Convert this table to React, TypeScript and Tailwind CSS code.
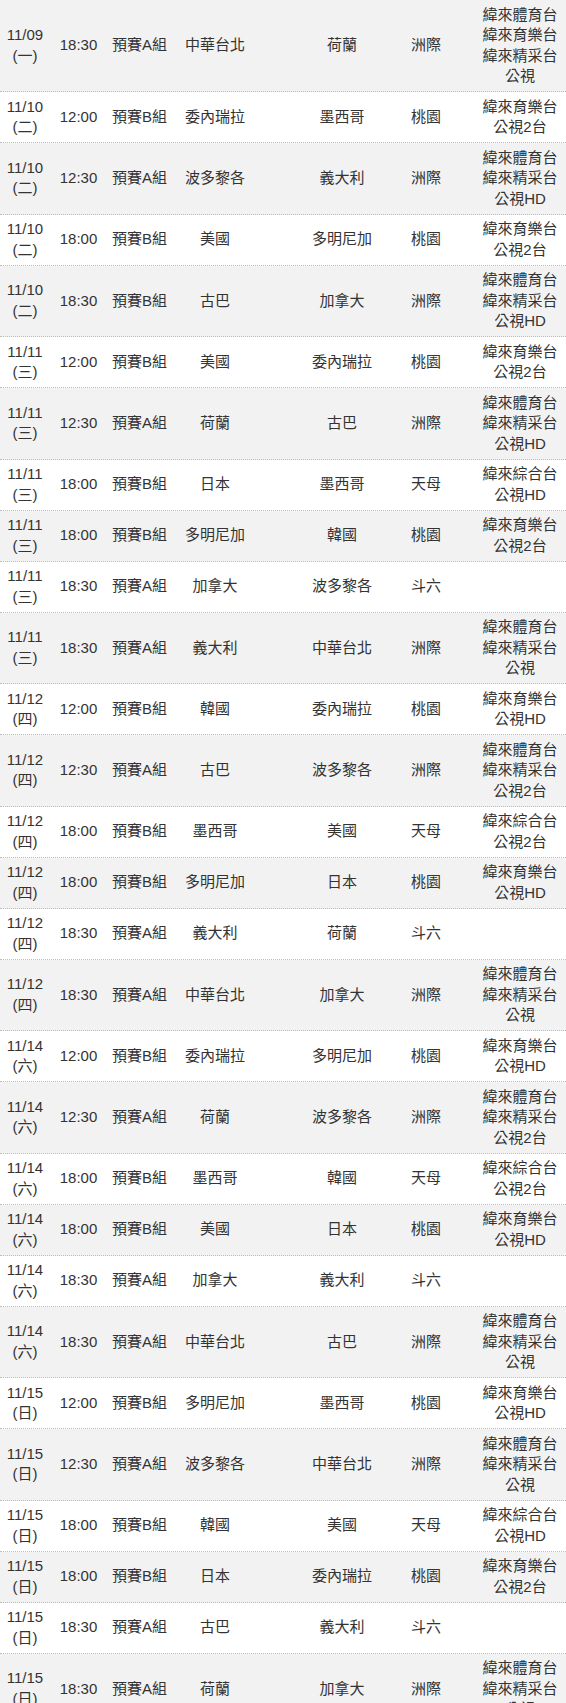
type Game = {
  date: string;
  day: string;
  time: string;
  group: string;
  home: string;
  away: string;
  venue: string;
  tv: string[];
};

const SPORTS = ["緯來體育台", "緯來精采台"];

const games: Game[] = [
  { date: "11/09", day: "一", time: "18:30", group: "預賽A組", home: "中華台北", away: "荷蘭", venue: "洲際", tv: ["緯來體育台", "緯來育樂台", "緯來精采台", "公視"] },
  { date: "11/10", day: "二", time: "12:00", group: "預賽B組", home: "委內瑞拉", away: "墨西哥", venue: "桃園", tv: ["緯來育樂台", "公視2台"] },
  { date: "11/10", day: "二", time: "12:30", group: "預賽A組", home: "波多黎各", away: "義大利", venue: "洲際", tv: [...SPORTS, "公視HD"] },
  { date: "11/10", day: "二", time: "18:00", group: "預賽B組", home: "美國", away: "多明尼加", venue: "桃園", tv: ["緯來育樂台", "公視2台"] },
  { date: "11/10", day: "二", time: "18:30", group: "預賽B組", home: "古巴", away: "加拿大", venue: "洲際", tv: [...SPORTS, "公視HD"] },
  { date: "11/11", day: "三", time: "12:00", group: "預賽B組", home: "美國", away: "委內瑞拉", venue: "桃園", tv: ["緯來育樂台", "公視2台"] },
  { date: "11/11", day: "三", time: "12:30", group: "預賽A組", home: "荷蘭", away: "古巴", venue: "洲際", tv: [...SPORTS, "公視HD"] },
  { date: "11/11", day: "三", time: "18:00", group: "預賽B組", home: "日本", away: "墨西哥", venue: "天母", tv: ["緯來綜合台", "公視HD"] },
  { date: "11/11", day: "三", time: "18:00", group: "預賽B組", home: "多明尼加", away: "韓國", venue: "桃園", tv: ["緯來育樂台", "公視2台"] },
  { date: "11/11", day: "三", time: "18:30", group: "預賽A組", home: "加拿大", away: "波多黎各", venue: "斗六", tv: [] },
  { date: "11/11", day: "三", time: "18:30", group: "預賽A組", home: "義大利", away: "中華台北", venue: "洲際", tv: [...SPORTS, "公視"] },
  { date: "11/12", day: "四", time: "12:00", group: "預賽B組", home: "韓國", away: "委內瑞拉", venue: "桃園", tv: ["緯來育樂台", "公視HD"] },
  { date: "11/12", day: "四", time: "12:30", group: "預賽A組", home: "古巴", away: "波多黎各", venue: "洲際", tv: [...SPORTS, "公視2台"] },
  { date: "11/12", day: "四", time: "18:00", group: "預賽B組", home: "墨西哥", away: "美國", venue: "天母", tv: ["緯來綜合台", "公視2台"] },
  { date: "11/12", day: "四", time: "18:00", group: "預賽B組", home: "多明尼加", away: "日本", venue: "桃園", tv: ["緯來育樂台", "公視HD"] },
  { date: "11/12", day: "四", time: "18:30", group: "預賽A組", home: "義大利", away: "荷蘭", venue: "斗六", tv: [] },
  { date: "11/12", day: "四", time: "18:30", group: "預賽A組", home: "中華台北", away: "加拿大", venue: "洲際", tv: [...SPORTS, "公視"] },
  { date: "11/14", day: "六", time: "12:00", group: "預賽B組", home: "委內瑞拉", away: "多明尼加", venue: "桃園", tv: ["緯來育樂台", "公視HD"] },
  { date: "11/14", day: "六", time: "12:30", group: "預賽A組", home: "荷蘭", away: "波多黎各", venue: "洲際", tv: [...SPORTS, "公視2台"] },
  { date: "11/14", day: "六", time: "18:00", group: "預賽B組", home: "墨西哥", away: "韓國", venue: "天母", tv: ["緯來綜合台", "公視2台"] },
  { date: "11/14", day: "六", time: "18:00", group: "預賽B組", home: "美國", away: "日本", venue: "桃園", tv: ["緯來育樂台", "公視HD"] },
  { date: "11/14", day: "六", time: "18:30", group: "預賽A組", home: "加拿大", away: "義大利", venue: "斗六", tv: [] },
  { date: "11/14", day: "六", time: "18:30", group: "預賽A組", home: "中華台北", away: "古巴", venue: "洲際", tv: [...SPORTS, "公視"] },
  { date: "11/15", day: "日", time: "12:00", group: "預賽B組", home: "多明尼加", away: "墨西哥", venue: "桃園", tv: ["緯來育樂台", "公視HD"] },
  { date: "11/15", day: "日", time: "12:30", group: "預賽A組", home: "波多黎各", away: "中華台北", venue: "洲際", tv: [...SPORTS, "公視"] },
  { date: "11/15", day: "日", time: "18:00", group: "預賽B組", home: "韓國", away: "美國", venue: "天母", tv: ["緯來綜合台", "公視HD"] },
  { date: "11/15", day: "日", time: "18:00", group: "預賽B組", home: "日本", away: "委內瑞拉", venue: "桃園", tv: ["緯來育樂台", "公視2台"] },
  { date: "11/15", day: "日", time: "18:30", group: "預賽A組", home: "古巴", away: "義大利", venue: "斗六", tv: [] },
  { date: "11/15", day: "日", time: "18:30", group: "預賽A組", home: "荷蘭", away: "加拿大", venue: "洲際", tv: [...SPORTS, "公視"] },
];

function Row({ g, index }: { g: Game; index: number }) {
  return (
    <div
      className={`grid grid-cols-[50px_57px_65px_86px_126px_84px_1fr] items-center border-b border-dotted border-[#bdbdbd] py-[4.5px] text-center ${
        index % 2 === 0 ? "bg-[#f2f2f2]" : "bg-white"
      }`}
    >
      {/* date */}
      <div>
        <div>{g.date}</div>
        <div>({g.day})</div>
      </div>
      <div>{g.time}</div>
      <div>{g.group}</div>
      <div>{g.home}</div>
      <div className="pl-[42px]">{g.away}</div>
      <div>{g.venue}</div>
      <div className="pl-[6px]">
        {g.tv.map((ch) => (
          <div key={ch}>{ch}</div>
        ))}
      </div>
    </div>
  );
}

export default function App() {
  return (
    <div
      className="w-[566px] bg-white text-[15px] leading-[20.5px] text-[#333]"
      style={{ fontFamily: '"Liberation Sans", "Noto Sans CJK TC", sans-serif' }}
    >
      {games.map((g, i) => (
        <Row key={i} g={g} index={i} />
      ))}
    </div>
  );
}
